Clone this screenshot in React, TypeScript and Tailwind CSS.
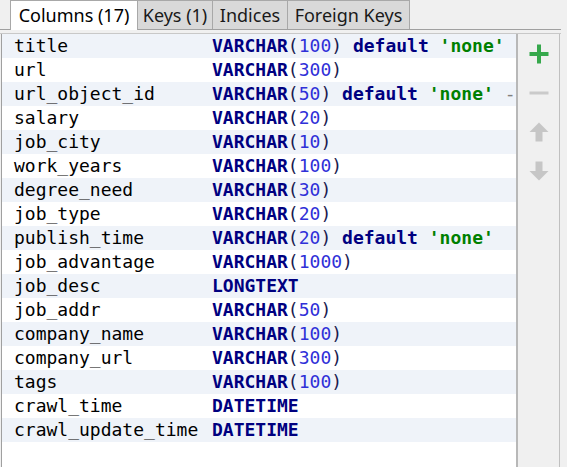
import React from "react";

type Col = { name: string; type: string; len?: string; def?: boolean; comment?: boolean };

const cols: Col[] = [
  { name: "title", type: "VARCHAR", len: "100", def: true },
  { name: "url", type: "VARCHAR", len: "300" },
  { name: "url_object_id", type: "VARCHAR", len: "50", def: true, comment: true },
  { name: "salary", type: "VARCHAR", len: "20" },
  { name: "job_city", type: "VARCHAR", len: "10" },
  { name: "work_years", type: "VARCHAR", len: "100" },
  { name: "degree_need", type: "VARCHAR", len: "30" },
  { name: "job_type", type: "VARCHAR", len: "20" },
  { name: "publish_time", type: "VARCHAR", len: "20", def: true },
  { name: "job_advantage", type: "VARCHAR", len: "1000" },
  { name: "job_desc", type: "LONGTEXT" },
  { name: "job_addr", type: "VARCHAR", len: "50" },
  { name: "company_name", type: "VARCHAR", len: "100" },
  { name: "company_url", type: "VARCHAR", len: "300" },
  { name: "tags", type: "VARCHAR", len: "100" },
  { name: "crawl_time", type: "DATETIME" },
  { name: "crawl_update_time", type: "DATETIME" },
];

const mono = "font-['DejaVu_Sans_Mono','Liberation_Mono',monospace]";

function Tab({ label, active, w }: { label: string; active?: boolean; w: string }) {
  if (active) {
    return (
      <div
        className={`${w} h-[30px] -mb-px bg-white border border-b-0 border-[#a8a8a8] flex items-center justify-center text-[18px] text-black relative z-10`}
      >
        {label}
      </div>
    );
  }
  return (
    <div
      className={`${w} h-[29px] bg-[#d9d9d9] border border-b-0 border-l-0 border-[#a8a8a8] flex items-center justify-center text-[18px] text-[#1a1a1a]`}
    >
      {label}
    </div>
  );
}

export default function App() {
  return (
    <div className="w-[567px] h-[467px] bg-[#f0f0f0] flex flex-col overflow-hidden font-['Noto_Sans','Open_Sans',sans-serif]">
      <div className="w-[561px] h-[30px] border-b border-[#a0a0a0] flex items-end pl-[10px] shrink-0">
        <Tab label="Columns (17)" active w="w-[128px]" />
        <Tab label="Keys (1)" w="w-[75px]" />
        <Tab label="Indices" w="w-[75px]" />
        <Tab label="Foreign Keys" w="w-[122px]" />
      </div>
      <div className="h-[3px] shrink-0" />
      <div className="flex-1 flex w-[561px] border-t border-[#c8c8c8] min-h-0">
        <div className="ml-[1px] w-[515px] border-l border-[#a0a0a0] bg-white overflow-hidden">
          {cols.map((c, i) => (
            <div
              key={c.name}
              className={`h-[24px] flex items-center ${mono} text-[18px] leading-[24px] whitespace-nowrap ${
                i % 2 === 0 ? "bg-[#eff3f9]" : "bg-white"
              }`}
            >
              <div className="w-[210px] pl-[12px] shrink-0 text-black">{c.name}</div>
              <div className="flex-1 overflow-hidden">
                <span className="font-bold text-[#000080]">{c.type}</span>
                {c.len && (
                  <>
                    <span className="text-[#1a1a50]">(</span>
                    <span className="text-[#3030d8]">{c.len}</span>
                    <span className="text-[#1a1a50]">)</span>
                  </>
                )}
                {c.def && (
                  <>
                    <span> </span>
                    <span className="font-bold text-[#000080]">default</span>
                    <span> </span>
                    <span className="font-bold text-[#008000]">'none'</span>
                  </>
                )}
                {c.comment && <span className="text-[#808080]"> -</span>}
              </div>
            </div>
          ))}
        </div>
        <div className="w-[2px] bg-[#b8b8b8] shrink-0" />
        <div className="w-[42px] border-r border-[#c0c0c0] flex flex-col items-center shrink-0">
          <div className="h-[39px] w-full flex items-center justify-center">
            <svg width="20" height="20" viewBox="0 0 20 20">
              <rect x="8" y="0.5" width="4" height="19" fill="#36a84c" />
              <rect x="0.5" y="8" width="19" height="4" fill="#36a84c" />
            </svg>
          </div>
          <div className="h-[39px] w-full flex items-center justify-center">
            <svg width="20" height="20" viewBox="0 0 20 20">
              <rect x="0.5" y="8.5" width="19" height="3" fill="#cacaca" />
            </svg>
          </div>
          <div className="h-[39px] w-full flex items-center justify-center">
            <svg width="20" height="20" viewBox="0 0 20 20">
              <polygon points="10,0.5 19.5,10 13.5,10 13.5,19.5 6.5,19.5 6.5,10 0.5,10" fill="#c6c6c6" />
            </svg>
          </div>
          <div className="h-[39px] w-full flex items-center justify-center">
            <svg width="20" height="20" viewBox="0 0 20 20">
              <polygon points="10,19.5 19.5,10 13.5,10 13.5,0.5 6.5,0.5 6.5,10 0.5,10" fill="#c6c6c6" />
            </svg>
          </div>
        </div>
      </div>
    </div>
  );
}
